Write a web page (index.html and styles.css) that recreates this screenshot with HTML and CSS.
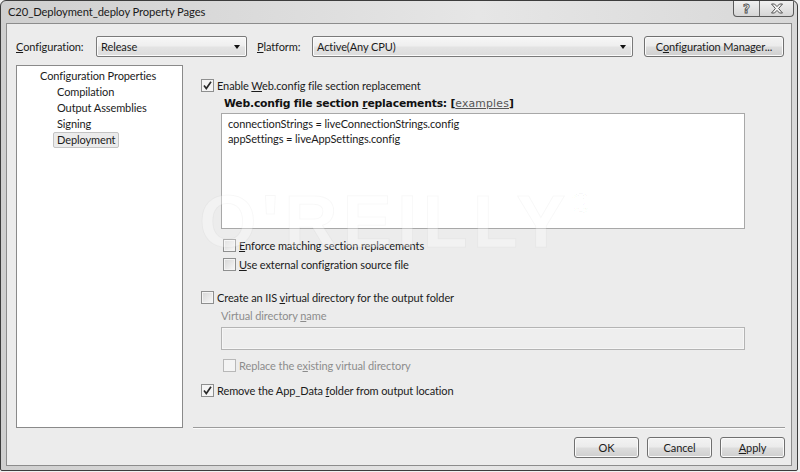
FILE: index.html
```html
<!DOCTYPE html>
<html lang="en">
<head>
    <meta charset="UTF-8">
    <title>C20_Deployment_deploy Property Pages</title>
    <link rel="stylesheet" href="styles.css">
</head>
<body>
<div class="window">
    <div class="titlebar">
        <span class="title">C20_Deployment_deploy Property Pages</span>
        <div class="caption">
            <span class="cap-btn help">?</span>
            <span class="cap-btn close">
                <svg width="14" height="11" viewBox="0 0 14 11"><path d="M1.5 1H4.5L7 3.6L9.5 1H12.5L8.6 5.5L12.5 10H9.5L7 7.4L4.5 10H1.5L5.4 5.5Z" fill="#f4f4f4" stroke="#555" stroke-width="1"/></svg>
            </span>
        </div>
    </div>

    <div class="client">
        <div class="config-row">
            <label class="lbl lbl-config"><u>C</u>onfiguration:</label>
            <div class="combo combo-config"><span>Release</span><i class="arrow"></i></div>
            <label class="lbl lbl-platform"><u>P</u>latform:</label>
            <div class="combo combo-platform"><span>Active(Any CPU)</span><i class="arrow"></i></div>
            <button class="btn btn-manager">C<u>o</u>nfiguration Manager...</button>
        </div>

        <div class="main">
            <ul class="tree">
                <li class="root">Configuration Properties</li>
                <li>Compilation</li>
                <li>Output Assemblies</li>
                <li>Signing</li>
                <li><span class="selected">Deployment</span></li>
            </ul>

            <div class="page">
                <div class="check-row row-enable">
                    <span class="check on"><svg width="11" height="11" viewBox="0 0 11 11"><path d="M2 5.5L4.3 8.5L9 1.8" fill="none" stroke="#2a2a2a" stroke-width="1.7"/></svg></span>
                    <span>Enable <u>W</u>eb.config file section replacement</span>
                </div>
                <div class="sub">
                    <div class="section-title">Web.config file section <u>r</u>eplacements: [<span class="link">examples</span>]</div>
                    <div class="textarea">
                        <div>connectionStrings = liveConnectionStrings.config</div>
                        <div>appSettings = liveAppSettings.config</div>
                    </div>
                    <div class="check-row row-enforce">
                        <span class="check"></span>
                        <span><u>E</u>nforce matching section replacements</span>
                    </div>
                    <div class="check-row row-external">
                        <span class="check"></span>
                        <span><u>U</u>se external configration source file</span>
                    </div>
                </div>

                <div class="check-row row-iis">
                    <span class="check"></span>
                    <span>Create an IIS <u>v</u>irtual directory for the output folder</span>
                </div>
                <div class="sub">
                    <div class="disabled-label row-vdname">Virtual directory <u>n</u>ame</div>
                    <div class="textbox"></div>
                    <div class="check-row row-replace disabled">
                        <span class="check"></span>
                        <span>Replace the e<u>x</u>isting virtual directory</span>
                    </div>
                </div>

                <div class="check-row row-remove">
                    <span class="check on"><svg width="11" height="11" viewBox="0 0 11 11"><path d="M2 5.5L4.3 8.5L9 1.8" fill="none" stroke="#2a2a2a" stroke-width="1.7"/></svg></span>
                    <span>Remove the App_Data <u>f</u>older from output location</span>
                </div>
            </div>
        </div>

        <div class="buttons">
            <button class="btn">OK</button>
            <button class="btn">Cancel</button>
            <button class="btn"><u>A</u>pply</button>
        </div>
    </div>

    <div class="watermark">O'REILLY<sup>®</sup></div>
</div>
</body>
</html>
```

FILE: styles.css
```css
html, body{
    margin: 0;
    padding: 0;
    background: #f0f0f0;
}

body{
    font-family: Lato, "Open Sans", sans-serif;
    font-size: 11px;
    letter-spacing: -0.1px;
    color: #1b1b1b;
}

u{
    text-decoration: underline;
    text-underline-offset: 1px;
}

.window{
    position: relative;
    box-sizing: border-box;
    width: 798px;
    height: 471px;
    border: 1px solid #3c3c3c;
    border-radius: 6px 6px 2px 2px;
    background: linear-gradient(90deg, #cfcfcf 0%, #dedede 40%, #e6e6e6 60%, #d8d8d8 100%);
    display: flex;
    flex-direction: column;
    overflow: hidden;
}

.titlebar{
    height: 22px;
    display: flex;
    justify-content: space-between;
    align-items: flex-start;
    padding-left: 7px;
    flex: none;
}

.title{
    line-height: 22px;
    font-size: 11.2px;
    color: #1a1a1a;
}

.caption{
    display: flex;
    margin-right: 3px;
    border: 1px solid #5a5a5a;
    border-top: none;
    border-radius: 0 0 4px 4px;
    overflow: hidden;
    background: linear-gradient(#f0f0f0, #d6d6d6);
}

.cap-btn{
    height: 15px;
    display: flex;
    align-items: center;
    justify-content: center;
}

.help{
    width: 25px;
    border-right: 1px solid #6a6a6a;
    font-family: "DejaVu Sans", sans-serif;
    font-weight: bold;
    font-size: 12px;
    color: #f4f4f4;
    -webkit-text-stroke: 0.8px #4a4a4a;
}

.close{
    width: 33px;
}

.client{
    flex: 1;
    margin: 0 5px 4px 5px;
    border: 1px solid #8c8c8c;
    background: #ececec;
    display: flex;
    flex-direction: column;
}

/* top row */
.config-row{
    display: flex;
    align-items: center;
    height: 21px;
    margin-top: 12px;
    padding-left: 9px;
}

.lbl-config{
    width: 80px;
}

.lbl-platform{
    width: 55px;
    margin-left: 10px;
}

.combo{
    box-sizing: border-box;
    height: 21px;
    border: 1px solid #7a7a7a;
    border-radius: 2px;
    background: linear-gradient(#f7f7f7 0%, #efefef 45%, #e3e3e3 55%, #dcdcdc 100%);
    box-shadow: inset 0 0 0 1px #fbfbfb;
    display: flex;
    align-items: center;
    justify-content: space-between;
    padding: 0 6px 0 4px;
}

.combo-config{
    width: 151px;
}

.combo-platform{
    width: 321px;
}

.arrow{
    width: 0;
    height: 0;
    border-left: 3.5px solid transparent;
    border-right: 3.5px solid transparent;
    border-top: 4px solid #111;
}

.btn{
    box-sizing: border-box;
    height: 21px;
    width: 65px;
    border: 1px solid #707070;
    border-radius: 3px;
    background: linear-gradient(#f3f3f3 0%, #ebebeb 48%, #dddddd 52%, #cfcfcf 100%);
    box-shadow: inset 0 0 0 1px #fafafa;
    font: inherit;
    letter-spacing: inherit;
    color: #1b1b1b;
    padding: 0;
}

.btn-manager{
    width: 140px;
    margin-left: 11px;
}

/* tree + page */
.main{
    display: flex;
    margin-top: 8px;
    height: 363px;
}

.tree{
    box-sizing: border-box;
    width: 167px;
    height: 363px;
    margin: 0 0 0 9px;
    padding: 2px 0 0 23px;
    list-style: none;
    background: #fff;
    border: 1px solid #8a8a8a;
}

.tree li{
    height: 16px;
    line-height: 16px;
    padding-left: 17px;
}

.tree li.root{
    padding-left: 0;
}

.selected{
    display: inline-block;
    height: 14px;
    line-height: 14px;
    margin-left: -4px;
    padding: 0 3px;
    border: 1px solid #c4c4c4;
    border-radius: 2px;
    background: #ebebeb;
}

.page{
    box-sizing: border-box;
    width: 592px;
    margin-left: 10px;
    padding-top: 12px;
    border-bottom: 1px solid #9c9c9c;
    box-shadow: 0 1px 0 #fbfbfb;
}

.check-row{
    display: flex;
    align-items: center;
    height: 16px;
    padding-left: 8px;
}

.check{
    box-sizing: border-box;
    width: 13px;
    height: 13px;
    margin-right: 3px;
    border: 1px solid #8e8f8f;
    background: linear-gradient(135deg, #d6d6d6, #f8f8f8);
    box-shadow: inset 0 0 0 1px #f4f4f4;
    display: flex;
    align-items: center;
    justify-content: center;
    flex: none;
}

.check.on{
    background: #f4f4f4;
}

.sub{
    padding-left: 28px;
}

.sub .check-row{
    padding-left: 2px;
}

.section-title{
    margin-top: 3px;
    height: 16px;
    line-height: 16px;
    padding-left: 3px;
    font-family: "DejaVu Sans", sans-serif;
    font-weight: bold;
    font-size: 10.8px;
    letter-spacing: -0.2px;
    color: #111;
}

.link{
    font-weight: normal;
    color: #555;
    letter-spacing: 0.2px;
    text-decoration: underline;
}

.textarea{
    box-sizing: border-box;
    width: 524px;
    height: 116px;
    margin-top: 1px;
    padding: 2px 6px;
    background: #fff;
    border: 1px solid #a8a8a8;
    line-height: 15px;
}

.row-enforce{
    margin-top: 8px;
}

.row-external{
    margin-top: 3px;
}

.row-iis{
    margin-top: 17px;
}

.disabled-label{
    margin-top: 3px;
    height: 16px;
    line-height: 16px;
    color: #8c8c8c;
}

.textbox{
    box-sizing: border-box;
    width: 524px;
    height: 23px;
    margin-top: 3px;
    border: 1px solid #b4b4b4;
    background: #eeeeee;
    box-shadow: inset 0 0 0 1px #f6f6f6;
}

.row-replace{
    margin-top: 7px;
}

.disabled{
    color: #8c8c8c;
}

.disabled .check{
    border-color: #b8b8b8;
    background: #f4f4f4;
}

.row-remove{
    margin-top: 9px;
}

/* bottom buttons */
.buttons{
    display: flex;
    justify-content: flex-end;
    gap: 8px;
    margin-top: 9px;
    padding-right: 6px;
}

.watermark{
    position: absolute;
    left: 198px;
    top: 194px;
    font-family: "Liberation Sans", sans-serif;
    font-weight: bold;
    font-size: 74px;
    line-height: 54px;
    letter-spacing: 5px;
    color: rgba(255, 255, 255, 0.3);
    -webkit-text-stroke: 1px rgba(0, 0, 0, 0.03);
    pointer-events: none;
}

.watermark sup{
    font-size: 28px;
    line-height: 0;
    vertical-align: 34px;
}
```
